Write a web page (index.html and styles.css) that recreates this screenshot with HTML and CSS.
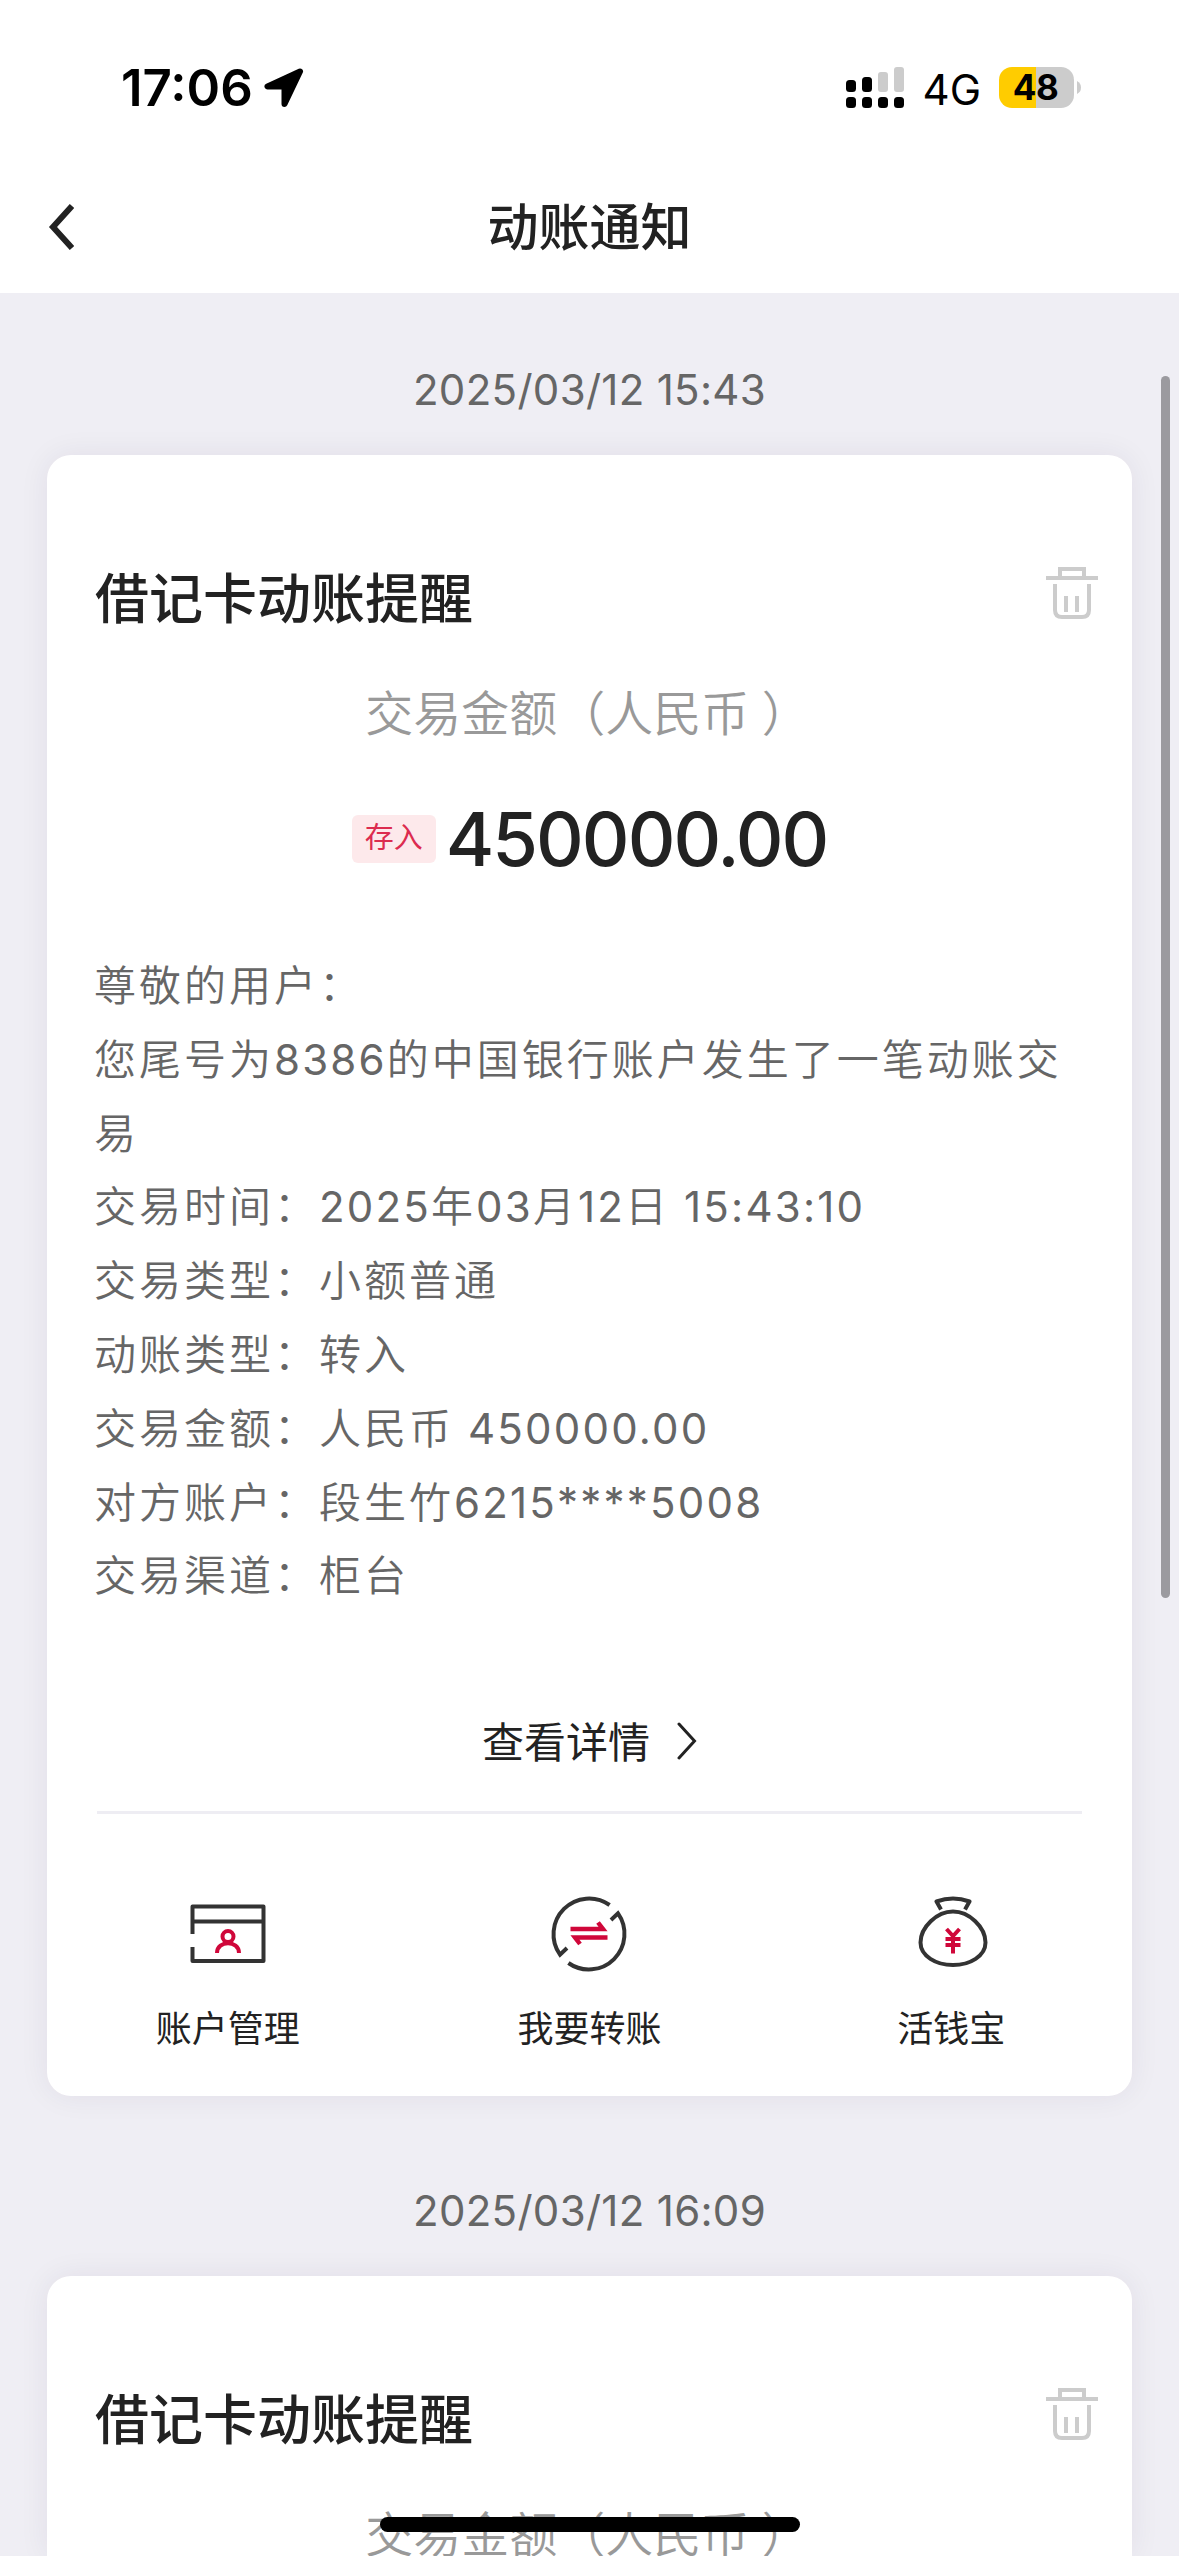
FILE: index.html
```
<!DOCTYPE html>
<html lang="zh-CN">
<head>
  <meta charset="UTF-8">
  <title>动账通知</title>
  <meta name="viewport" content="width=device-width, initial-scale=1.0">
  <link rel="stylesheet" href="styles.css">
</head>
<body>
  <header class="top">
    <div class="status-bar">
      <div class="status-left">
        <span class="clock">17:06</span>
        <svg class="location" width="40" height="40" viewBox="0 0 40 40">
          <path d="M36 3.500L3.500 18.500H20.500V36Z" fill="#000" stroke="#000" stroke-width="6" stroke-linejoin="round"/>
        </svg>
      </div>
      <div class="status-right">
        <svg class="signal" width="58" height="41" viewBox="0 0 58 41">
          <g fill="#ccc">
            <rect x="32" y="5" width="10" height="20" rx="3"/>
            <rect x="48" y="0" width="10" height="25" rx="3"/>
          </g>
          <rect x="0" y="13" width="10" height="12" rx="3.500"/>
          <rect x="16" y="10" width="10" height="15" rx="3.500"/>
          <rect x="0" y="30" width="10" height="11" rx="3.500"/>
          <rect x="16" y="30" width="10" height="11" rx="3.500"/>
          <rect x="32" y="30" width="10" height="11" rx="3.500"/>
          <rect x="48" y="30" width="10" height="11" rx="3.500"/>
        </svg>
        <span class="network">4G</span>
        <div class="battery">48</div>
        <svg class="battery-cap" width="4" height="13" viewBox="0 0 4 13">
          <path d="M0 0Q4 2 4 6.500T0 13Z" fill="#ccc"/>
        </svg>
      </div>
    </div>
    <nav class="nav-bar">
      <svg class="back" width="26" height="46" viewBox="0 0 26 46">
        <path d="M24 2L5 23L24 44" fill="none" stroke="#222" stroke-width="6"/>
      </svg>
      <h1>动账通知</h1>
    </nav>
  </header>

  <main class="messages">
    <time class="date">2025/03/12 15:43</time>
    <section class="card">
      <div class="card-head">
        <h2>借记卡动账提醒</h2>
        <svg class="trash" width="52" height="52" viewBox="0 0 52 52">
          <path d="M0 11H52M14 11V2H38V11M9 17V43Q9 50 16 50H36Q43 50 43 43V17M20 29V45M31 29V45" fill="none" stroke="#ccc" stroke-width="4"/>
        </svg>
      </div>
      <p class="amount-label">交易金额（人民币 ）</p>
      <div class="amount">
        <span class="tag">存入</span>
        <span class="value">450000.00</span>
      </div>
      <div class="detail">
        <p>尊敬的用户：</p>
        <p>您尾号为<span class="num">8386</span>的中国银行账户发生了一笔动账交易</p>
        <p>交易时间：<span class="num">2025</span>年<span class="num">03</span>月<span class="num">12</span>日<span class="num"> 15:43:10</span></p>
        <p>交易类型：小额普通</p>
        <p>动账类型：转入</p>
        <p>交易金额：人民币<span class="num"> 450000.00</span></p>
        <p>对方账户：段生竹<span class="num">6215****5008</span></p>
        <p>交易渠道：柜台</p>
      </div>
      <a class="more">
        <span>查看详情</span>
        <svg width="20" height="38" viewBox="0 0 20 38">
          <path d="M2 2L17.500 19L2 36" fill="none" stroke="#222" stroke-width="3" stroke-linecap="round"/>
        </svg>
      </a>
      <div class="actions">
        <a class="action">
          <svg width="80" height="80" viewBox="0 0 80 80">
            <g fill="none" stroke="#333" stroke-width="4" stroke-linejoin="round">
              <path d="M4.500 40V12.500H75.500V67H4.500V53M4.500 27.500H75.500"/>
            </g>
            <g fill="none" stroke="#d0073a" stroke-width="4">
              <circle cx="40" cy="42.500" r="5.500"/>
              <path d="M29 59C29 46 51 46 51 59"/>
            </g>
          </svg>
          <span>账户管理</span>
        </a>
        <a class="action">
          <svg width="80" height="80" viewBox="0 0 80 80">
            <g fill="none" stroke="#333" stroke-width="4">
              <path d="M60.600 11A35.600 35.600 0 0 0 11 60.600L18 54"/>
              <path d="M19.400 69A35.600 35.600 0 0 0 69 19.400L62 26"/>
            </g>
            <path d="M21.500 35H54L49 28.500M58.500 43.500H26L31 50" fill="none" stroke="#d0073a" stroke-width="4.500"/>
          </svg>
          <span>我要转账</span>
        </a>
        <a class="action">
          <svg width="80" height="80" viewBox="0 0 80 80">
            <g fill="none" stroke="#333" stroke-width="4" stroke-linejoin="round">
              <path d="M30 15.500L25.500 7.500Q42 1.500 58.500 7.500L54 15.500"/>
              <path d="M42 17.500C58 17.500 74.500 33 74.500 48.500C74.500 62 59 71 42 71S9.500 62 9.500 48.500C9.500 33 26 17.500 42 17.500Z"/>
            </g>
            <path d="M35.500 35L42 42L48.500 35M42 42V59.500M34.500 45H49.500M34.500 51H49.500" fill="none" stroke="#d0073a" stroke-width="4"/>
          </svg>
          <span>活钱宝</span>
        </a>
      </div>
    </section>

    <time class="date">2025/03/12 16:09</time>
    <section class="card">
      <div class="card-head">
        <h2>借记卡动账提醒</h2>
        <svg class="trash" width="52" height="52" viewBox="0 0 52 52">
          <path d="M0 11H52M14 11V2H38V11M9 17V43Q9 50 16 50H36Q43 50 43 43V17M20 29V45M31 29V45" fill="none" stroke="#ccc" stroke-width="4"/>
        </svg>
      </div>
      <p class="amount-label">交易金额（人民币 ）</p>
    </section>
  </main>

  <div class="scrollbar"></div>
  <div class="home-indicator"></div>
</body>
</html>
```

FILE: styles.css
```
* {
  box-sizing: border-box;
}
body {
  font-family: Inter, 'Noto Sans CJK SC', sans-serif;
  background: #efeef4;
  color: #222;
  margin: 0;
  height: 2556px;
  overflow: hidden;
  position: relative;
}
h1, h2, p {
  margin: 0;
}
svg {
  display: block;
  flex: none;
}

/* status bar and title */
.top {
  background: #fff;
  height: 293px;
}
.status-bar {
  display: flex;
  justify-content: space-between;
  align-items: center;
  height: 175px;
  padding: 0 98px 0 121px;
  color: #000;
}
.status-left,
.status-right {
  display: flex;
  align-items: center;
}
.clock {
  font-size: 51px;
  font-weight: 600;
}
.location {
  margin-left: 11px;
}
.network {
  font-size: 42px;
  margin-left: 19px;
  line-height: 41px;
  padding-top: 3px;
}
.battery {
  width: 75px;
  height: 41px;
  line-height: 41px;
  margin-left: 18px;
  padding-right: 2px;
  border-radius: 13px;
  background: linear-gradient(to right, #ffcc00 49%, #ccc 49%);
  font-size: 35px;
  font-weight: 700;
  letter-spacing: -0.5px;
  text-align: center;
}
.battery-cap {
  margin-left: 3px;
}
.nav-bar {
  display: grid;
  grid-template-columns: 120px 1fr 120px;
  align-items: center;
  height: 104px;
}
.back {
  margin-left: 48px;
}
h1 {
  font-size: 51px;
  font-weight: 500;
  text-align: center;
  padding-bottom: 6px;
}

/* message list */
.messages {
  padding: 0 47px;
}
.date {
  display: flex;
  justify-content: center;
  align-items: center;
  height: 162px;
  padding-top: 31px;
  font-size: 42px;
  letter-spacing: 0.3px;
  color: #666;
}
.card {
  background: #fff;
  height: 1641px;
  border-radius: 24px;
  padding: 0 50px;
  box-shadow: 0 0 30px rgba(40, 30, 70, 0.07);
}
.card + .date {
  height: 180px;
  padding-top: 48px;
}
.card:last-child {
  height: 280px;
  border-radius: 24px 24px 0 0;
}
.card-head {
  display: flex;
  justify-content: space-between;
  padding-top: 112px;
  margin: 0 -16px 0 -2px;
}
.card-head h2 {
  font-size: 54px;
  font-weight: 500;
  line-height: 66px;
}
.amount-label {
  margin: 47px 4px 0 0;
  font-family: 'Noto Sans CJK SC', sans-serif;
  font-weight: 350;
  font-size: 48px;
  line-height: 60px;
  word-spacing: 2px;
  color: #999;
  text-align: center;
}
.amount {
  display: flex;
  justify-content: center;
  align-items: center;
  gap: 10px;
  height: 80px;
  margin-top: 59px;
}
.tag {
  width: 84px;
  height: 48px;
  border-radius: 6px;
  background: #fde9eb;
  color: #dc2c4f;
  font-size: 29px;
  line-height: 46px;
  text-align: center;
}
.value {
  font-size: 74px;
  font-weight: 500;
  letter-spacing: -2px;
}
.detail {
  margin: 70px -16px 0 -3px;
  font-size: 42px;
  font-weight: 350;
  line-height: 73.8px;
  letter-spacing: 3px;
  color: #666;
}
.num {
  font-weight: 400;
  letter-spacing: 2.2px;
  white-space: pre;
}
.more {
  display: flex;
  justify-content: center;
  align-items: center;
  gap: 27px;
  height: 140px;
  margin-top: 61px;
  padding-bottom: 3px;
  border-bottom: 3px solid #eeedf3;
  font-size: 42px;
}
.more span {
  padding-bottom: 4px;
}
.actions {
  display: grid;
  grid-template-columns: repeat(3, 1fr);
  margin: 80px -50px 0;
}
.action {
  display: flex;
  flex-direction: column;
  align-items: center;
  font-size: 36px;
  line-height: 50px;
}
.action span {
  margin-top: 30px;
}

/* overlays */
.scrollbar {
  position: absolute;
  top: 376px;
  left: 1161px;
  width: 9px;
  height: 1222px;
  border-radius: 5px;
  background: #9b9a9f;
}
.home-indicator {
  position: absolute;
  left: 380px;
  top: 2517px;
  width: 420px;
  height: 15px;
  border-radius: 8px;
  background: #000;
}
```
